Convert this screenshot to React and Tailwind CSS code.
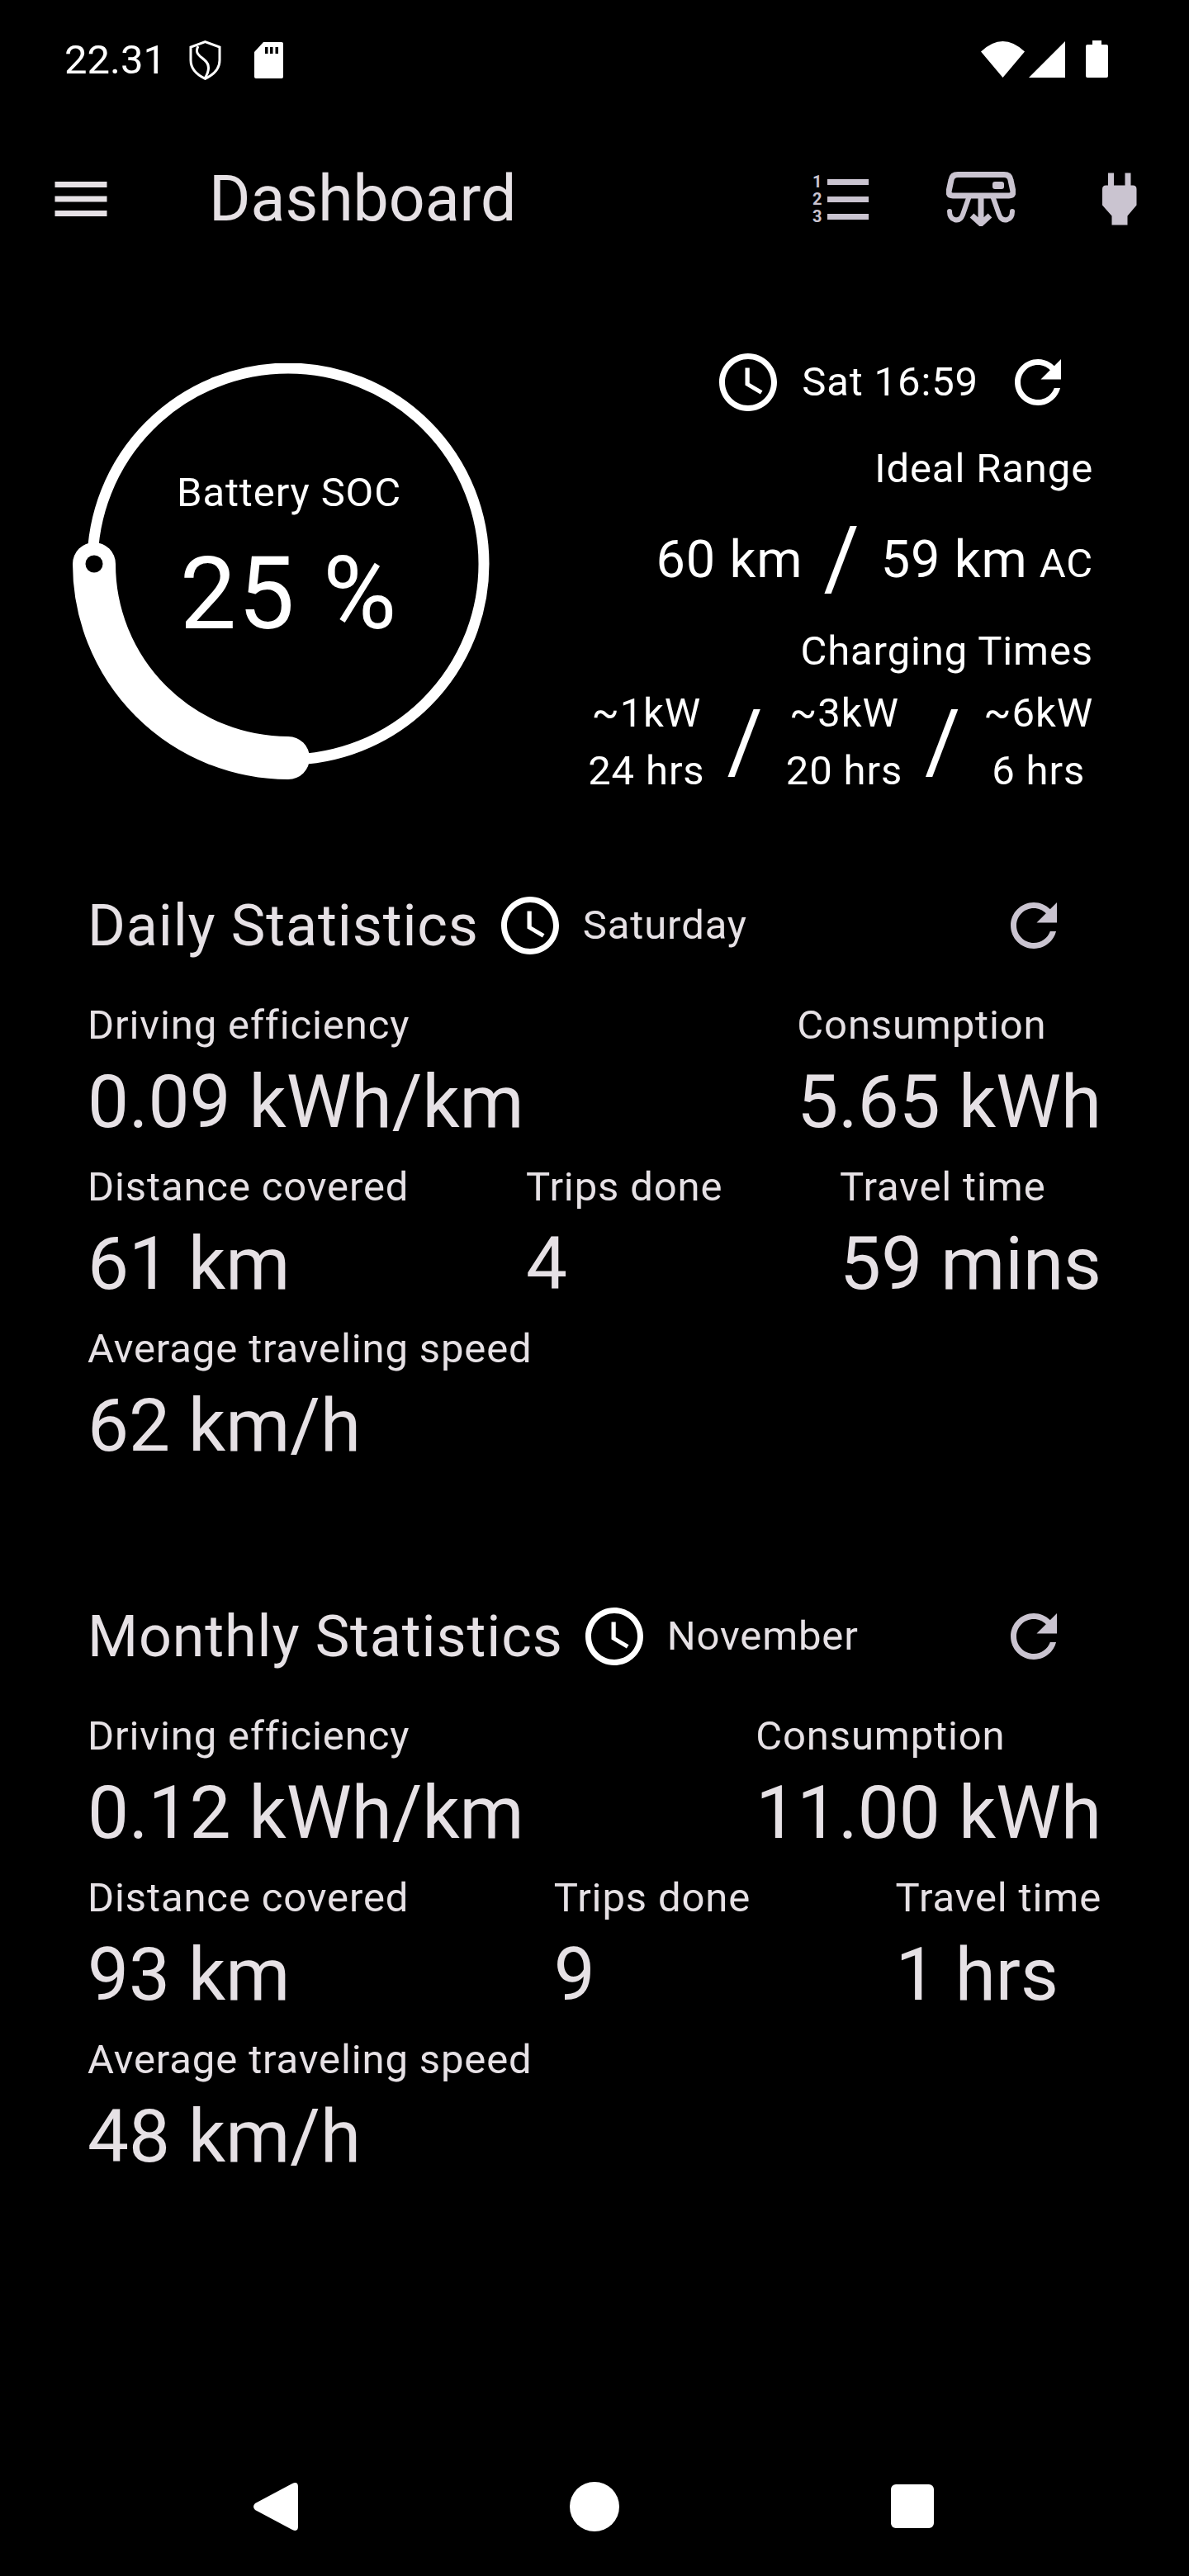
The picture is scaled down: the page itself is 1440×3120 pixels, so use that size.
import React from "react";

const clockPath =
  "M11.99 2C6.47 2 2 6.48 2 12s4.47 10 9.99 10C17.52 22 22 17.52 22 12S17.52 2 11.99 2zM12 20c-4.42 0-8-3.58-8-8s3.58-8 8-8 8 3.58 8 8-3.58 8-8 8zM12.5 7H11v6l5.25 3.15.75-1.23-4.5-2.67z";
const refreshPath =
  "M17.65 6.35C16.2 4.9 14.21 4 12 4c-4.42 0-7.99 3.58-7.99 8s3.57 8 7.99 8c3.73 0 6.84-2.55 7.73-6h-2.08c-.82 2.33-3.04 4-5.65 4-3.31 0-6-2.69-6-6s2.69-6 6-6c1.66 0 3.14.69 4.22 1.78L13 11h7V4l-2.35 2.35z";

const MaterialIcon = ({ d, className }) => (
  <svg viewBox="0 0 24 24" fill="currentColor" className={className}>
    <path d={d} />
  </svg>
);

const StatusBar = () => (
  <div className="h-[146px] flex items-start justify-between pl-[78px] pr-[98px] pt-[49px] text-white">
    <div className="flex items-start">
      <span className="text-[49px] leading-[48px]">22.31</span>
      {/* shield */}
      <svg viewBox="0 0 39 48" className="w-[39px] h-[48px] ml-[28px]" fill="none" stroke="white" strokeWidth="3">
        <path d="M19.5 1.7L37 8v16q0 14-17.5 22.3Q2 38 2 24V8z" />
        <path d="M11 7c-5 9 3 12 8 17 7 6 5 14 0 22" />
      </svg>
      {/* sd card */}
      <svg viewBox="0 0 35 44" className="w-[35px] h-[44px] ml-[40px] mt-[2px]">
        <path d="M11 0h22q2 0 2 2v40q0 2-2 2H2q-2 0-2-2V12z" fill="white" />
        <path d="M13 6h3.5v8H13zM19 6h3.5v8H19zM25.500 6H29v8h-3.500z" fill="black" />
      </svg>
    </div>
    <div className="flex items-start mt-[1px]">
      <svg viewBox="0 0 53 44" className="w-[53px] h-[44px]" fill="white">
        <path d="M0 12.500Q26.500-12.500 53 12.500L26.500 44z" />
      </svg>
      <svg viewBox="0 0 44 44" className="w-[44px] h-[44px] ml-[5px]" fill="white">
        <path d="M44 0v44H0z" />
      </svg>
      <svg viewBox="0 0 27 45" className="w-[27px] h-[45px] ml-[25px] -mt-[1px]" fill="white">
        <path d="M8 0h11v5h6q2 0 2 2v36q0 2-2 2H2q-2 0-2-2V7q0-2 2-2h6z" />
      </svg>
    </div>
  </div>
);

// numbered list icon, digits stay real text
const ListIcon = () => (
  <div className="flex flex-col w-[68px]">
    {["1", "2", "3"].map((n) => (
      <div key={n} className="flex items-center h-[21px]">
        <span className="w-[18px] text-[20px] leading-[21px] font-bold">{n}</span>
        <div className="w-[50px] h-[7px] bg-[#cac4d0]" />
      </div>
    ))}
  </div>
);

const AppBar = () => (
  <div className="h-[190px] flex items-center pl-[56px] text-[#e6e1e5]">
    <MaterialIcon d="M3 18h18v-2H3v2zm0-5h18v-2H3v2zm0-7v2h18V6H3z" className="w-[84px] h-[84px] shrink-0" />
    <span className="ml-[113px] text-[77px] leading-[100px]">Dashboard</span>
    <div className="ml-auto flex items-center text-[#cac4d0] pr-[63px]">
      <ListIcon />
      <svg viewBox="0 0 84 66" className="w-[84px] h-[66px] ml-[94px]" fill="none" stroke="#cac4d0" strokeWidth="7" strokeLinecap="round" strokeLinejoin="round">
        <path d="M14 3.500h56q7 0 8 6.500l3 14q0 5-5 5H8q-5 0-5-5l3-14q1-6.500 8-6.500z" />
        <rect x="56" y="12" width="14" height="9" rx="3" fill="#cac4d0" stroke="none" />
        <path d="M42 32v29M31 53l11 10 11-10" strokeLinecap="butt" />
        <path d="M27 32l-7 20q-3 8-10 6-6-2-6-10M57 32l7 20q3 8 10 6 6-2 6-10" strokeWidth="6" />
      </svg>
      <svg viewBox="0 0 42 63" className="w-[42px] h-[64px] ml-[105px]" fill="#cac4d0">
        <path d="M7 0h7v15h13.500V0h7v15H37q4.500 0 4.500 4.500V39L30.500 52v11h-19V52L0 39V19.500Q0 15 4.500 15H7z" />
      </svg>
    </div>
  </div>
);

const Gauge = () => (
  <div className="relative w-[524px] h-[524px] shrink-0">
    <svg viewBox="0 0 524 524" className="w-full h-full" fill="none" stroke="white">
      <circle cx="261" cy="243" r="237" strokeWidth="13" />
      <path d="M26 243A235 235 0 0 0 261 478" strokeWidth="52" strokeLinecap="round" />
      <circle cx="26" cy="243" r="10.500" fill="black" stroke="none" />
    </svg>
    <div className="absolute left-[0px] w-[524px] top-[126px] flex flex-col items-center text-white">
      <span className="text-[49px] leading-[62px] tracking-[0.875px]">Battery SOC</span>
      <span className="text-[122px] leading-[136px] tracking-[2px] mt-[24px]">25 %</span>
    </div>
  </div>
);

const Slash = ({ className }) => <span className={`text-[105px] leading-none ${className}`}>/</span>;

const ChargeCol = ({ power, time }) => (
  <div className="flex flex-col items-center text-[49px] leading-[70px] tracking-[0.875px]">
    <span>{power}</span>
    <span>{time}</span>
  </div>
);

const Summary = () => (
  <div className="flex flex-col items-end text-white pr-[116px] -mt-[19px] tracking-[0.875px]">
    <div className="flex items-center h-[84px]">
      <MaterialIcon d={clockPath} className="w-[84px] h-[84px]" />
      <span className="ml-[23px] text-[49px]">Sat 16:59</span>
      <MaterialIcon d={refreshPath} className="w-[84px] h-[84px] ml-[30px] mr-[25px]" />
    </div>
    <span className="text-[49px] leading-[70px] mt-[28px]">Ideal Range</span>
    <div className="flex items-baseline h-[130px] mt-[8px] leading-[130px]">
      <span className="text-[63px]">60 km</span>
      <Slash className="mx-[25px] translate-y-[14px]" />
      <span className="text-[63px]">59 km</span>
      <span className="text-[49px] ml-[14px]">AC</span>
    </div>
    <span className="text-[49px] leading-[70px] mt-[13px]">Charging Times</span>
    <div className="flex items-center mt-[5px]">
      <ChargeCol power="~1kW" time="24 hrs" />
      <Slash className="mx-[27px]" />
      <ChargeCol power="~3kW" time="20 hrs" />
      <Slash className="mx-[27px]" />
      <ChargeCol power="~6kW" time="6 hrs" />
    </div>
  </div>
);

const Stat = ({ label, value }) => (
  <div className="flex flex-col pb-[11px] text-[#e6e1e5]">
    <span className="text-[49px] leading-[62px] tracking-[0.875px]">{label}</span>
    <span className="text-[89px] leading-[123px]">{value}</span>
  </div>
);

const StatsSection = ({ title, day, stats, className }) => (
  <section className={`px-[106px] ${className}`}>
    <div className="flex items-center h-[84px] text-[#e6e1e5]">
      <span className="text-[70px] tracking-[0.875px]">{title}</span>
      <MaterialIcon d={clockPath} className="w-[84px] h-[84px] ml-[20px] text-white" />
      <span className="ml-[22px] text-[49px] tracking-[0.875px]">{day}</span>
      <MaterialIcon d={refreshPath} className="w-[84px] h-[84px] ml-auto mr-[40px] text-[#cac4d0]" />
    </div>
    <div className="mt-[48px] flex justify-between">
      <Stat {...stats[0]} />
      <Stat {...stats[1]} />
    </div>
    <div className="flex justify-between">
      <Stat {...stats[2]} />
      <Stat {...stats[3]} />
      <Stat {...stats[4]} />
    </div>
    <Stat {...stats[5]} />
  </section>
);

const daily = [
  { label: "Driving efficiency", value: "0.09 kWh/km" },
  { label: "Consumption", value: "5.65 kWh" },
  { label: "Distance covered", value: "61 km" },
  { label: "Trips done", value: "4" },
  { label: "Travel time", value: "59 mins" },
  { label: "Average traveling speed", value: "62 km/h" },
];

const monthly = [
  { label: "Driving efficiency", value: "0.12 kWh/km" },
  { label: "Consumption", value: "11.00 kWh" },
  { label: "Distance covered", value: "93 km" },
  { label: "Trips done", value: "9" },
  { label: "Travel time", value: "1 hrs" },
  { label: "Average traveling speed", value: "48 km/h" },
];

const NavBar = () => (
  <div className="mt-auto h-[140px] flex items-start justify-between pl-[307px] pr-[309px] pt-[26px]">
    <svg viewBox="0 0 54 58" className="w-[54px] h-[58px] mt-[1px]" fill="white">
      <path d="M47 1q7-3 7 4v48q0 7-7 4L2 33q-4-4 0-8z" />
    </svg>
    <div className="w-[60px] h-[60px] rounded-full bg-white" />
    <div className="w-[52px] h-[53px] rounded-[6px] bg-white mt-[3px]" />
  </div>
);

export default function App() {
  return (
    <div className="w-[1440px] h-[3120px] bg-black flex flex-col font-['Roboto',sans-serif]">
      <StatusBar />
      <AppBar />
      <div className="flex justify-between h-[524px] pl-[88px] mt-[104px]">
        <Gauge />
        <Summary />
      </div>
      <StatsSection title="Daily Statistics" day="Saturday" stats={daily} className="mt-[115px]" />
      <StatsSection title="Monthly Statistics" day="November" stats={monthly} className="mt-[141px]" />
      <NavBar />
    </div>
  );
}
